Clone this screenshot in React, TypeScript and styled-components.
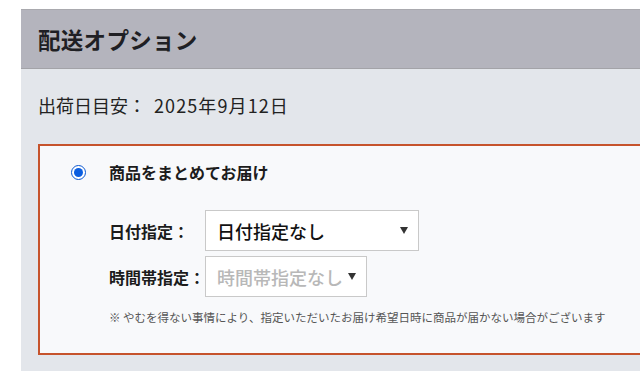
import styled, { createGlobalStyle } from "styled-components";

const GlobalStyle = createGlobalStyle`
  html, body {
    margin: 0;
    padding: 0;
    background: #ffffff;
    overflow: hidden;
  }
  body {
    font-family: "Noto Sans CJK JP", "Noto Sans", sans-serif;
    color: #222;
  }
`;

const Page = styled.div`
  padding: 9px 0 0 21px;
  width: 640px;
  height: 371px;
  box-sizing: border-box;
  overflow: hidden;
`;

const Panel = styled.section`
  width: 720px;
`;

const Header = styled.div`
  display: flex;
  align-items: center;
  height: 58px;
  padding-left: 17px;
  background: #b4b4bd;
  border-top: 1px solid #a9a9ae;
  border-bottom: 1px solid #a3a3a8;
  box-shadow: 0 1px 0 #eceef2;
`;

const Title = styled.h2`
  margin: 0;
  font-size: 22.5px;
  font-weight: 700;
  color: #1f1f24;
  letter-spacing: 0.3px;
`;

const Body = styled.div`
  background: #e3e6eb;
  padding: 23px 0 40px 17px;
`;

const ShipDate = styled.div`
  font-size: 18px;
  line-height: 26px;
  color: #222;
`;

const DateValue = styled.span`
  margin-left: 8px;
  letter-spacing: 1.1px;
`;

const OptionBox = styled.div`
  margin-top: 26px;
  background: #f8f9fb;
  border: 2px solid #c6532c;
  padding: 14px 0 28px 31px;
`;

const RadioRow = styled.label`
  display: flex;
  align-items: center;
  gap: 23px;
  height: 24px;
`;

const Radio = styled.span`
  display: inline-flex;
  align-items: center;
  justify-content: center;
  width: 15px;
  height: 15px;
  box-sizing: border-box;
  border-radius: 50%;
  border: 1px solid #0b57d0;
  background: #ffffff;
  &::after {
    content: "";
    width: 9px;
    height: 9px;
    border-radius: 50%;
    background: #0b5ee0;
  }
`;

const RadioLabel = styled.span`
  font-size: 16px;
  font-weight: 700;
  color: #1c1c1c;
`;

const Fields = styled.div`
  display: grid;
  grid-template-columns: 96px auto;
  row-gap: 5px;
  align-items: center;
  justify-content: start;
  justify-items: start;
  margin: 26px 0 0 38px;
`;

const FieldLabel = styled.span`
  font-size: 16px;
  font-weight: 700;
  color: #1c1c1c;
`;

const Select = styled.div<{ $disabled?: boolean; $width?: number }>`
  display: flex;
  align-items: center;
  justify-content: space-between;
  gap: 5px;
  height: 41px;
  width: ${(p) => (p.$width ? `${p.$width}px` : "auto")};
  box-sizing: border-box;
  padding: 0 8px 0 11px;
  background: #ffffff;
  border: 1px solid #c9c9c9;
  font-size: 18px;
  font-weight: 500;
  color: ${(p) => (p.$disabled ? "#b8b8b8" : "#111")};
`;

const Arrow = styled.span`
  width: 0;
  height: 0;
  margin-right: 2px;
  border-left: 4px solid transparent;
  border-right: 4px solid transparent;
  border-top: 7px solid #333;
`;

const Note = styled.p`
  margin: 12px 0 0 38px;
  font-size: 11.5px;
  line-height: 16px;
  color: #555;
`;

export default function App() {
  return (
    <Page>
      <GlobalStyle />
      <Panel>
        <Header>
          <Title>配送オプション</Title>
        </Header>
        <Body>
          <ShipDate>
            出荷日目安：<DateValue>2025年9月12日</DateValue>
          </ShipDate>
          <OptionBox>
            <RadioRow>
              <Radio />
              <RadioLabel>商品をまとめてお届け</RadioLabel>
            </RadioRow>
            <Fields>
              <FieldLabel>日付指定：</FieldLabel>
              <Select $width={214}>
                <span>日付指定なし</span>
                <Arrow />
              </Select>
              <FieldLabel>時間帯指定：</FieldLabel>
              <Select $disabled>
                <span>時間帯指定なし</span>
                <Arrow />
              </Select>
            </Fields>
            <Note>※ やむを得ない事情により、指定いただいたお届け希望日時に商品が届かない場合がございます</Note>
          </OptionBox>
        </Body>
      </Panel>
    </Page>
  );
}
